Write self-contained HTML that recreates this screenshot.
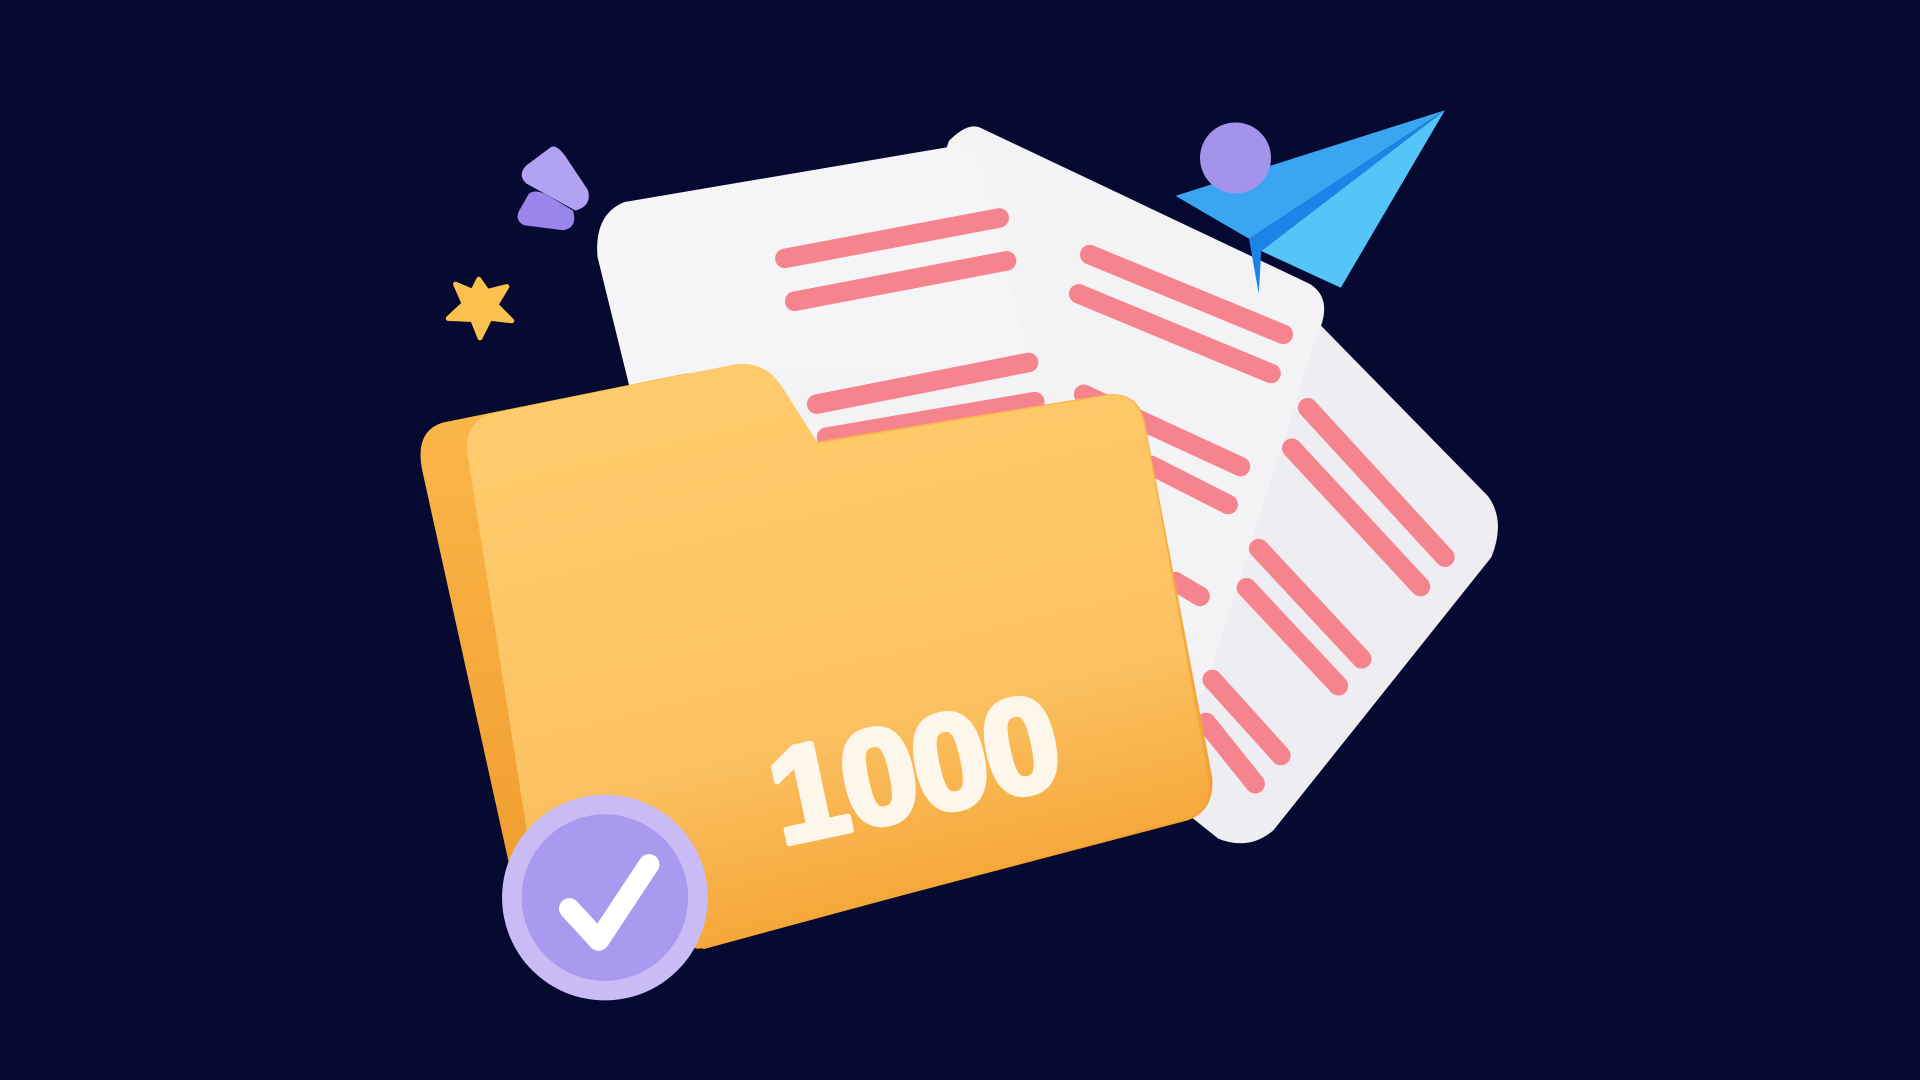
<!DOCTYPE html>
<html><head><meta charset="utf-8"><style>
html,body{margin:0;padding:0;background:#060a30;width:1920px;height:1080px;overflow:hidden}
svg{display:block}
.n{font-family:"Liberation Sans",Arial,sans-serif;font-weight:700}
</style></head><body>
<svg width="1920" height="1080" viewBox="0 0 1568 882" xmlns="http://www.w3.org/2000/svg">
<defs>
<linearGradient id="fg" x1="0" y1="0" x2="0.3" y2="1"><stop offset="0" stop-color="#fecd6e"/><stop offset="0.7" stop-color="#fcc262"/><stop offset="1" stop-color="#f5a73a"/></linearGradient>
<linearGradient id="bg2" x1="0" y1="0" x2="0" y2="1"><stop offset="0" stop-color="#fbb84c"/><stop offset="1" stop-color="#f09a2c"/></linearGradient>
</defs>
<rect width="1568" height="882" fill="#060a30"/>
<!-- papers -->
<path d="M1075 262 L1215 405 Q1230 425 1218 455 L1040 678 Q1020 695 995 685 L970 665 L960 420 Z" fill="#eeedf2"/>
<path d="M800 104 Q790 100 775 115 L700 330 L960 600 L985 560 L1075 275 Q1090 245 1070 232 Z" fill="#f3f2f5"/>
<path d="M510 165 L775 120 Q790 118 800 135 L850 330 L520 340 L488 210 Q485 175 510 165 Z" fill="#f5f4f6"/>
<path d="M600 300 L930 300 L975 560 L700 560 Z" fill="#f3f2f5"/>
<g stroke="#f6848f" stroke-width="16" stroke-linecap="round" fill="none">
<line x1="641" y1="211" x2="816" y2="178"/>
<line x1="649" y1="246" x2="822" y2="213"/>
<line x1="667" y1="330" x2="840" y2="296"/>
<line x1="675" y1="357" x2="845" y2="328"/>
<line x1="890" y1="208" x2="1048" y2="273"/>
<line x1="881" y1="240" x2="1038" y2="305"/>
<line x1="885" y1="322" x2="1013" y2="381"/>
<line x1="940" y1="380" x2="1003" y2="412"/>
<line x1="1068" y1="333" x2="1180" y2="455"/>
<line x1="1055" y1="366" x2="1160" y2="479"/>
<line x1="1028" y1="448" x2="1112" y2="538"/>
<line x1="1018" y1="480" x2="1093" y2="560"/>
<line x1="990" y1="555" x2="1046" y2="617"/>
<line x1="985" y1="590" x2="1025" y2="640"/>
<line x1="960" y1="475" x2="980" y2="487"/>
</g>
<!-- plane -->
<path d="M960 160 L1180 90 L1020 195 Z" fill="#3aa6f2"/>
<path d="M1180 90 L1095 235 L1030 205 Z" fill="#55c4f6"/>
<path d="M1020 195 L1180 90 L1030 205 L1028 240 Z" fill="#1c84e8"/>
<circle cx="1009" cy="129" r="29" fill="#a493ea"/>
<!-- sparkles -->
<path d="M450 120 Q455 118 462 128 L480 155 Q484 168 470 172 L430 150 Q422 143 430 135 Z" fill="#b2a2f3"/>
<path d="M432 158 Q438 154 448 160 L468 172 Q472 186 460 188 L428 184 Q420 180 424 172 Z" fill="#9a85ea"/>
<path d="M391 228 L398 238 L414 234 L405 249 L418 262 L400 260 L392 276 L386 261 L366 260 L379 248 L372 232 L386 238 Z" fill="#fbc04e" stroke="#fbc04e" stroke-width="4" stroke-linejoin="round"/>
<!-- folder back -->
<path d="M362 345 L560 305 Q585 302 600 318 L640 365 L905 322 Q930 320 935 345 L990 635 Q992 662 970 670 L570 775 L440 740 Q425 738 420 725 L345 385 Q338 352 362 345 Z" fill="url(#bg2)"/>
<!-- folder front -->
<path d="M400 338 L598 298 Q625 293 640 318 L668 362 L905 323 Q928 320 934 345 L986 630 Q992 660 970 668 L575 775 L450 745 Q440 740 438 728 L382 372 Q378 346 400 338 Z" fill="url(#fg)"/>
<text class="n" x="0" y="0" transform="translate(638,690) rotate(-12)" font-size="110" fill="#fdf6ea" stroke="#fdf6ea" stroke-width="5" stroke-linejoin="round" letter-spacing="-2">1000</text>
<!-- badge -->
<circle cx="494" cy="733" r="84" fill="#c9bcf6"/>
<circle cx="494" cy="733" r="68" fill="#a999ef"/>
<path d="M465 742 L489 768 L530 706" stroke="#fff" stroke-width="17" stroke-linecap="round" stroke-linejoin="round" fill="none"/>
</svg>
</body></html>
